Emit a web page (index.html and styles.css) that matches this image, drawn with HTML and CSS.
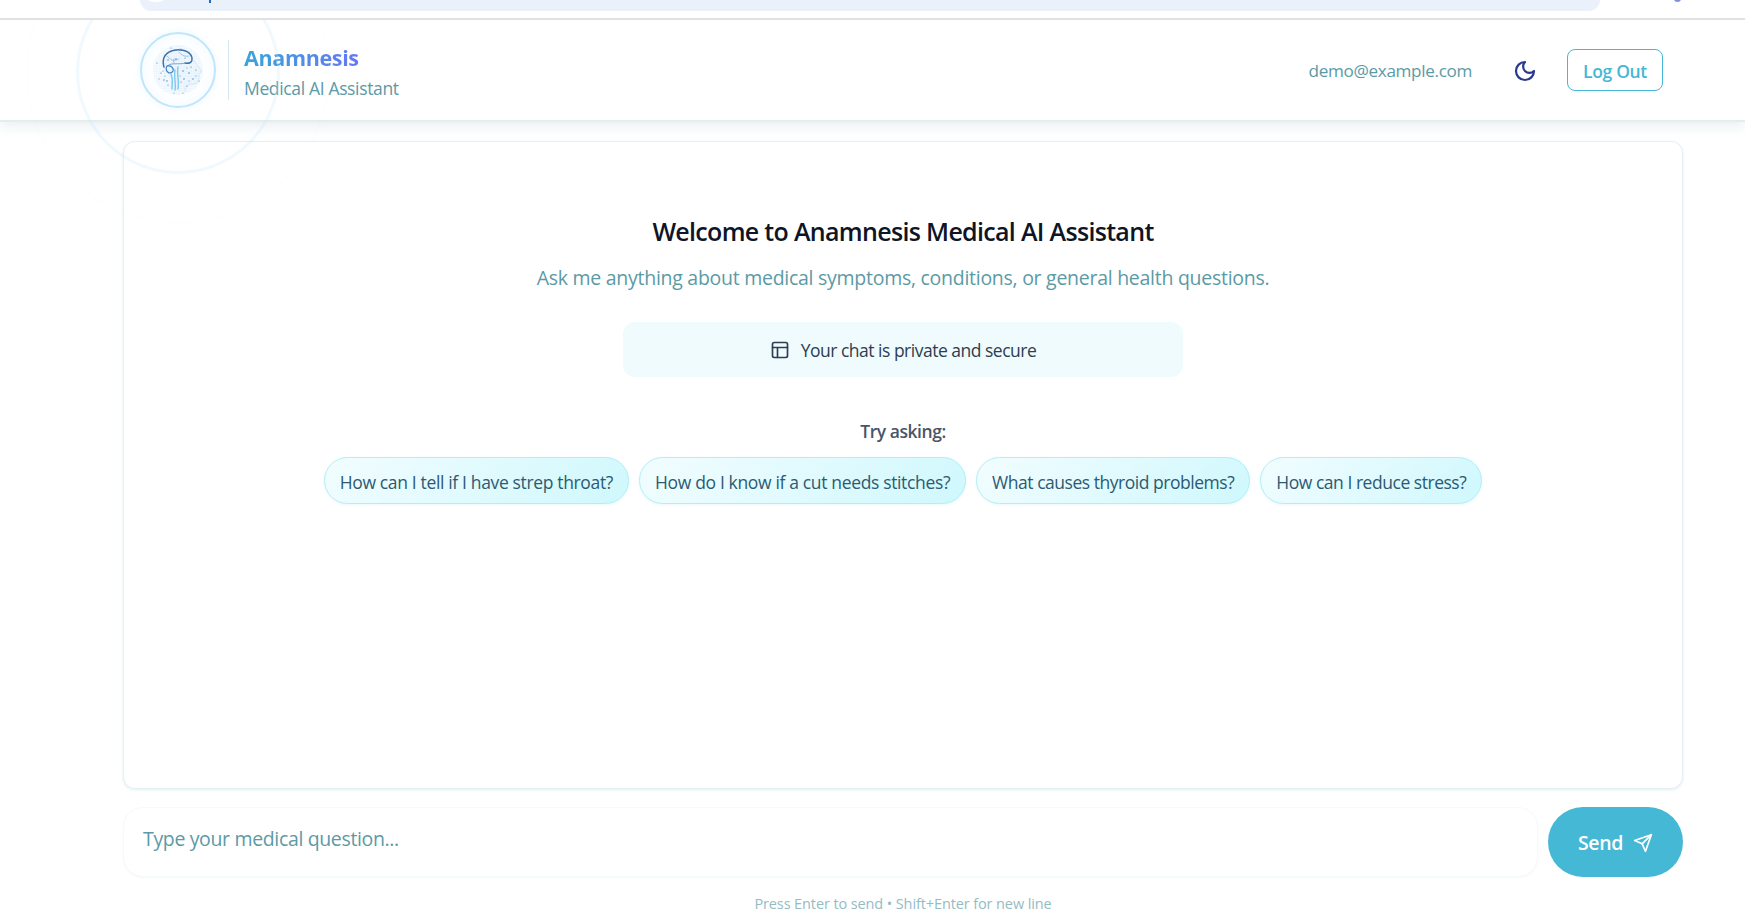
FILE: index.html
```html
<!DOCTYPE html>
<html lang="en">
<head>
<meta charset="utf-8">
<title>Anamnesis Medical AI Assistant</title>
<link rel="stylesheet" href="styles.css">
</head>
<body>
<div class="browser-strip">
  <div class="address-pill"><span class="address-dot"></span><span class="address-mark"></span></div>
  <span class="profile-dot"></span>
</div>
<div class="app">
  <div class="halo halo-inner"></div>
  <div class="halo halo-outer"></div>
  <header class="topbar">
    <div class="brand">
      <div class="logo">
        <svg viewBox="0 0 70 70" width="70" height="70" aria-hidden="true">
          <defs>
            <pattern id="stipple" width="2.5" height="2.5" patternUnits="userSpaceOnUse">
              <circle cx="1" cy="1" r=".5" fill="#a9cdea"/>
            </pattern>
            <pattern id="stipple-dark" width="2" height="2" patternUnits="userSpaceOnUse" patternTransform="rotate(30)">
              <circle cx="1" cy="1" r=".5" fill="#5f9fd8"/>
            </pattern>
          </defs>
          <circle cx="35" cy="35" r="25" fill="#f5fafe"/>
          <circle cx="35" cy="35" r="25" fill="url(#stipple)" opacity=".4"/>
          <path d="M20 30C18 21 25 16 33 15c8-1 15 2 17 9l9 12-3 4c0 6-2 9-8 9-3 0-5 2-6 7H28V44C22 40 21 35 20 30Z" fill="url(#stipple-dark)" opacity=".22"/>
          <g fill="none" stroke-linecap="round">
            <path d="M21 32C18 22 24 16 33 15c9-1 16 3 16 9 0 4-4 5-7 4" stroke="#3a6fae" stroke-width="1.5" stroke-dasharray="2.4 .5"/>
            <path d="M42 28c-6 2-12-1-18 3" stroke="#6fa5d8" stroke-width="1" stroke-dasharray="1.5 .7"/>
            <path d="M24 21c3 3 5 6 12 3M36 17c2 3 6 5 10 4M31 24c-1 3 0 4 1 5" stroke="#8ab8e0" stroke-width=".8" stroke-dasharray="1.5 .6"/>
            <path d="M24 31a3.6 4.4 0 1 0 6 5c1-3-2-6-6-5Z" stroke="#3f84c4" stroke-width="1.2"/>
            <path d="M28 39c2 5 1 10 1 15M32 35c-1 7 1 13 0 20M35 32c-1 8 1 14 0 22" stroke="#70c4f2" stroke-width="1.3" stroke-dasharray="3 .6"/>
            <path d="M50 25c3 3 5 7 8 10 1 3-2 3-2 5 0 5-1 10-8 9-3 0-5 2-6 7" stroke="#cfe2f2" stroke-width=".8" stroke-dasharray="1.5 .5"/>
          </g>
          <g fill="#2f7ec4">
            <circle cx="14" cy="28" r=".6"/><circle cx="18" cy="38" r=".6"/><circle cx="21" cy="45" r=".7"/>
            <circle cx="25" cy="50" r=".6"/><circle cx="16" cy="44" r=".5"/><circle cx="24" cy="46" r=".7"/>
            <circle cx="41" cy="44" r=".7"/><circle cx="46" cy="38" r=".7"/><circle cx="50" cy="44" r=".7"/>
            <circle cx="53" cy="35" r=".6"/><circle cx="44" cy="51" r=".6"/><circle cx="38" cy="14" r=".5"/>
            <circle cx="28" cy="13" r=".5"/><circle cx="42" cy="23" r=".6"/><circle cx="33" cy="24" r=".7"/>
            <circle cx="25" cy="25" r=".7"/><circle cx="48" cy="32" r=".6"/><circle cx="40" cy="36" r=".7"/>
            <circle cx="56" cy="46" r=".5"/><circle cx="38" cy="47" r=".6"/><circle cx="22" cy="20" r=".6"/>
            <circle cx="31" cy="58" r=".5"/><circle cx="40" cy="58" r=".5"/><circle cx="48" cy="20" r=".5"/>
            <circle cx="20" cy="36" r=".5"/><circle cx="22" cy="41" r=".5"/><circle cx="37" cy="41" r=".5"/>
            <circle cx="44" cy="33" r=".5"/><circle cx="53" cy="41" r=".5"/><circle cx="46" cy="46" r=".5"/>
          </g>
        </svg>
      </div>
      <div class="brand-text">
        <div class="brand-name">Anamnesis</div>
        <div class="brand-sub">Medical AI Assistant</div>
      </div>
    </div>
    <div class="account">
      <span class="email">demo@example.com</span>
      <button class="theme-toggle" type="button" aria-label="Toggle theme">
        <svg viewBox="0 0 24 24" width="24" height="24" fill="none" stroke="currentColor" stroke-width="2.2" stroke-linecap="round" stroke-linejoin="round"><path d="M12 3a6 6 0 0 0 9 9 9 9 0 1 1-9-9Z"/></svg>
      </button>
      <button class="logout" type="button">Log Out</button>
    </div>
  </header>
  <main class="content">
    <section class="chat-card">
      <h1 class="welcome">Welcome to Anamnesis Medical AI Assistant</h1>
      <p class="intro">Ask me anything about medical symptoms, conditions, or general health questions.</p>
      <div class="privacy">
        <svg viewBox="0 0 24 24" width="20" height="20" fill="none" stroke="currentColor" stroke-width="2" stroke-linecap="round" stroke-linejoin="round"><rect x="3" y="3" width="18" height="18" rx="2"/><path d="M3 9h18M9 21V9"/></svg>
        <span>Your chat is private and secure</span>
      </div>
      <div class="try-label">Try asking:</div>
      <div class="chips">
        <button class="chip" type="button">How can I tell if I have strep throat?</button>
        <button class="chip" type="button">How do I know if a cut needs stitches?</button>
        <button class="chip chip-tight" type="button">What causes thyroid problems?</button>
        <button class="chip chip-tight" type="button">How can I reduce stress?</button>
      </div>
    </section>
    <div class="composer">
      <div class="question">Type your medical question...</div>
      <button class="send" type="button">
        <span>Send</span>
        <svg viewBox="0 0 24 24" width="20" height="20" fill="none" stroke="currentColor" stroke-width="2" stroke-linecap="round" stroke-linejoin="round"><path d="m22 2-7 20-4-9-9-4Z"/><path d="M22 2 11 13"/></svg>
      </button>
    </div>
    <div class="hint">Press Enter to send • Shift+Enter for new line</div>
  </main>
</div>
</body>
</html>
```
FILE: styles.css
```css
* { box-sizing: border-box; }
html, body { height: 100%; }
body {
  margin: 0;
  height: 909px;
  overflow: hidden;
  display: flex;
  flex-direction: column;
  background: #fff;
  font-family: "Open Sans", "Noto Sans", sans-serif;
  letter-spacing: -0.35px;
}
button { font: inherit; letter-spacing: inherit; cursor: pointer; }

.browser-strip {
  flex: none;
  height: 20px;
  border-bottom: 2px solid #e1e1e1;
  position: relative;
  overflow: hidden;
  padding-left: 140px;
}
.address-pill {
  width: 1460px;
  height: 11px;
  background: #ebf1fb;
  border-radius: 0 0 16px 16px;
  position: relative;
}
.address-dot {
  position: absolute;
  left: 4px;
  top: -12px;
  width: 24px;
  height: 14px;
  border-radius: 50%;
  background: #fff;
}
.address-mark {
  position: absolute;
  left: 69px;
  top: 0;
  width: 2px;
  height: 3px;
  background: #1a6fc4;
}
.profile-dot {
  position: absolute;
  left: 1674px;
  top: -4px;
  width: 7px;
  height: 6px;
  border-radius: 50%;
  background: #7d8fe0;
}

.app {
  flex: 1;
  min-height: 0;
  position: relative;
  overflow: hidden;
  display: flex;
  flex-direction: column;
  background: #fff;
}
.halo {
  position: absolute;
  border-radius: 50%;
  pointer-events: none;
  z-index: 3;
}
.halo-inner {
  left: 76px;
  top: -50px;
  width: 204px;
  height: 204px;
  border: 3px solid rgba(190, 228, 250, .24);
}
.halo-outer {
  left: 26px;
  top: -100px;
  width: 304px;
  height: 304px;
  border: 2px solid rgba(190, 228, 250, .03);
}

.topbar {
  flex: none;
  height: 102px;
  display: flex;
  align-items: center;
  justify-content: space-between;
  padding: 0 82px 0 140px;
  background: #fff;
  border-bottom: 2px solid #e2edf0;
  box-shadow: 0 4px 12px rgba(120, 150, 160, .16);
  position: relative;
  z-index: 2;
}
.brand { display: flex; align-items: center; }
.logo {
  width: 76px;
  height: 76px;
  border-radius: 50%;
  border: 2px solid #bfe6fb;
  background: radial-gradient(circle, #fff 40%, #f3faff 100%);
  display: flex;
  align-items: center;
  justify-content: center;
  box-shadow: 0 0 10px rgba(190, 228, 250, .25);
}
.brand-text {
  margin-left: 12px;
  padding-left: 15px;
  padding-top: 5px;
  height: 60px;
  border-left: 1px solid #d3e9ee;
  display: flex;
  flex-direction: column;
  justify-content: center;
}
.brand-name {
  font-size: 21.5px;
  line-height: 30px;
  font-weight: 700;
  background: linear-gradient(90deg, #3aa5d8, #6478f5);
  -webkit-background-clip: text;
  background-clip: text;
  color: transparent;
  width: max-content;
}
.brand-sub {
  font-size: 17.5px;
  line-height: 30px;
  color: #5b9aa6;
}
.account { display: flex; align-items: center; }
.email { font-size: 17.15px; padding-top: 1px; color: #5b9aa6; }
.theme-toggle {
  margin-left: 41px;
  margin-top: 1px;
  padding: 0;
  width: 24px;
  height: 24px;
  border: 0;
  background: none;
  color: #27388f;
}
.logout {
  margin-left: 30px;
  width: 96px;
  height: 42px;
  padding: 1px 0 0;
  background: #fff;
  border: 1px solid #44b8d6;
  border-radius: 8px;
  color: #44b8d6;
  font-size: 17.5px;
  font-weight: 600;
}

.content {
  flex: 1;
  min-height: 0;
  display: flex;
  flex-direction: column;
  padding: 19px 62px 0 123px;
}
.chat-card {
  flex: none;
  height: 648px;
  border: 1px solid #e4f0f3;
  border-radius: 12px;
  background: #fff;
  box-shadow: 0 1px 3px rgba(120, 170, 185, .2);
  padding: 71px 0 0;
  display: flex;
  flex-direction: column;
  align-items: center;
}
.welcome {
  margin: 0;
  font-size: 25px;
  line-height: 36px;
  font-weight: 600;
  letter-spacing: -0.68px;
  color: #0d1526;
}
.intro {
  margin: 11px 0 0;
  font-size: 19.5px;
  line-height: 36px;
  letter-spacing: -0.27px;
  color: #5b9aa6;
}
.privacy {
  margin-top: 26px;
  width: 560px;
  height: 55px;
  padding-top: 1px;
  border-radius: 12px;
  background: #f0fbfe;
  display: flex;
  align-items: center;
  justify-content: center;
  gap: 11px;
  font-size: 17.5px;
  letter-spacing: -0.5px;
  color: #2c3e50;
}
.try-label {
  margin-top: 40px;
  font-size: 17.5px;
  line-height: 28px;
  font-weight: 600;
  letter-spacing: -0.45px;
  color: #4a5568;
}
.chips {
  margin-top: 12px;
  display: flex;
  justify-content: center;
  gap: 10px;
}
.chip {
  height: 47px;
  padding: 2px 15px 0;
  border: 1px solid #b0eef9;
  border-radius: 24px;
  background: linear-gradient(135deg, #f2fdff, #cff8fd);
  box-shadow: 0 1px 3px rgba(120, 200, 220, .15);
  font-size: 17.5px;
  letter-spacing: -0.35px;
  color: #2c5a72;
  white-space: nowrap;
}
.chip-tight { letter-spacing: -0.47px; }

.composer {
  flex: none;
  margin-top: 18px;
  height: 70px;
  display: flex;
  gap: 10px;
}
.question {
  flex: 1;
  border: 1px solid #f7fafb;
  border-radius: 20px;
  box-shadow: 0 1px 2px rgba(60, 110, 130, .05);
  padding: 17px 19px 0;
  font-size: 19.5px;
  line-height: 28px;
  color: #5b9aa6;
  background: #fff;
}
.send {
  flex: none;
  width: 135px;
  border: 0;
  border-radius: 35px;
  background: #45b8d6;
  color: #fff;
  font-size: 19.5px;
  font-weight: 600;
  display: flex;
  align-items: center;
  justify-content: center;
  gap: 10px;
  padding: 1px 0 0;
}
.hint {
  margin-top: 22px;
  text-align: center;
  font-size: 14.5px;
  line-height: 10px;
  letter-spacing: -0.11px;
  color: #94bcc4;
}
```
